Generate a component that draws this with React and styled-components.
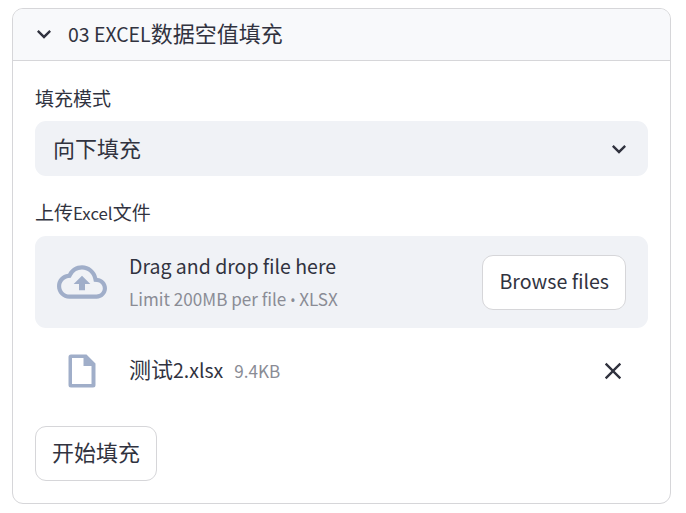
import React from 'react';
import styled, { createGlobalStyle } from 'styled-components';
import { MdExpandMore, MdClose, MdOutlineCloudUpload } from 'react-icons/md';

const Global = createGlobalStyle`
  html, body {
    margin: 0;
    background: #fff;
  }
  body {
    font-family: 'Noto Sans CJK SC', 'Noto Sans', sans-serif;
    color: #31333f;
  }
`;

const Page = styled.div`
  padding: 8px 15px 9px 12px;
`;

const Card = styled.section`
  border: 1px solid #d6d6d9;
  border-radius: 11px;
  overflow: hidden;
`;

const Header = styled.header`
  display: flex;
  align-items: center;
  gap: 10px;
  box-sizing: border-box;
  height: 52px;
  padding: 0 22px 6px 17px;
  background: #f8f9fb;
  border-bottom: 1px solid #d6d6d9;
  font-size: 22px;
  svg { flex: none; font-size: 28px; margin-top: 4px; }
`;

// the latin glyphs of the CJK font run large, so they are set smaller than the text round them
const Latin = styled.span`
  font-size: 0.885em;
`;

const Body = styled.div`
  display: flex;
  flex-direction: column;
  padding: 23px 22px 22px;
`;

const Label = styled.label`
  display: block;
  height: 28px;
  line-height: 28px;
  margin-bottom: ${p => p.$gap}px;
  font-size: 19px;
`;

const Select = styled.div`
  display: flex;
  align-items: center;
  justify-content: space-between;
  box-sizing: border-box;
  height: 55px;
  margin-bottom: 22px;
  padding: 0 15px 0 18px;
  background: #f0f2f6;
  border-radius: 11px;
  font-size: 22px;
  span { margin-top: -4px; }
  svg { font-size: 28px; }
`;

const Dropzone = styled.div`
  display: flex;
  align-items: center;
  height: 92px;
  padding: 0 22px;
  background: #f0f2f6;
  border-radius: 11px;
`;

const CloudIcon = styled(MdOutlineCloudUpload)`
  flex: none;
  font-size: 50px;
  color: #a0aec9;
`;

const DropText = styled.div`
  display: flex;
  flex: 1;
  flex-direction: column;
  gap: 3px;
  margin-left: 22px;
  margin-top: 1px;
`;

const DropTitle = styled.div`
  font-size: 19.5px;
  line-height: 32px;
`;

const DropHint = styled.div`
  font-size: 17.1px;
  line-height: 28px;
  color: #8a8c95;
`;

const Dot = styled.span`
  font-family: 'Noto Sans', sans-serif;
  font-size: 14px;
`;

const Button = styled.button`
  box-sizing: border-box;
  height: 55px;
  padding: 0 ${p => p.$side}px ${p => p.$lift}px;
  background: #fff;
  border: 1px solid #d6d6d9;
  border-radius: 11px;
  color: inherit;
  font: inherit;
  font-size: ${p => p.$size}px;
`;

const FileRow = styled.div`
  display: flex;
  align-items: center;
  height: 44px;
  margin-top: 21px;
  padding-left: 33px;
`;

const FileIcon = styled.svg`
  flex: none;
  width: 28px;
  height: 34px;
  fill: #a0aec9;
`;

const FileText = styled.div`
  display: flex;
  flex: 1;
  align-items: baseline;
  margin-top: -7px;
`;

const FileName = styled.span`
  margin-left: 33px;
  font-size: 22px;
`;

const FileSize = styled.span`
  margin-left: 11px;
  font-size: 17.1px;
  color: #8a8c95;
`;

const Remove = styled(MdClose)`
  font-size: 28px;
  margin-right: 21px;
`;

const Actions = styled.div`
  margin-top: 33px;
`;

export default function App() {
  return (
    <Page>
      <Global />
      <Card>
        <Header>
          <MdExpandMore />
          <span><Latin>03 EXCEL</Latin>数据空值填充</span>
        </Header>
        <Body>
          <Label $gap={9}>填充模式</Label>
          <Select>
            <span>向下填充</span>
            <MdExpandMore />
          </Select>
          <Label $gap={10}>上传<Latin>Excel</Latin>文件</Label>
          <Dropzone>
            <CloudIcon />
            <DropText>
              <DropTitle>Drag and drop file here</DropTitle>
              <DropHint>Limit 200MB per file <Dot>•</Dot> XLSX</DropHint>
            </DropText>
            <Button $size={19.6} $side={16} $lift={3}>Browse files</Button>
          </Dropzone>
          <FileRow>
            <FileIcon viewBox="0 0 28 34">
              <path fillRule="evenodd" d="M3 .5h15.500l9 9V31a2.500 2.500 0 0 1-2.500 2.500H3A2.500 2.500 0 0 1 .5 31V3A2.500 2.500 0 0 1 3 .5zm1 3.500v26h19.500V12h-8V4H4z" />
            </FileIcon>
            <FileText>
              <FileName>测试<Latin>2.xlsx</Latin></FileName>
              <FileSize>9.4KB</FileSize>
            </FileText>
            <Remove />
          </FileRow>
          <Actions>
            <Button $size={22} $side={16} $lift={6}>开始填充</Button>
          </Actions>
        </Body>
      </Card>
    </Page>
  );
}
